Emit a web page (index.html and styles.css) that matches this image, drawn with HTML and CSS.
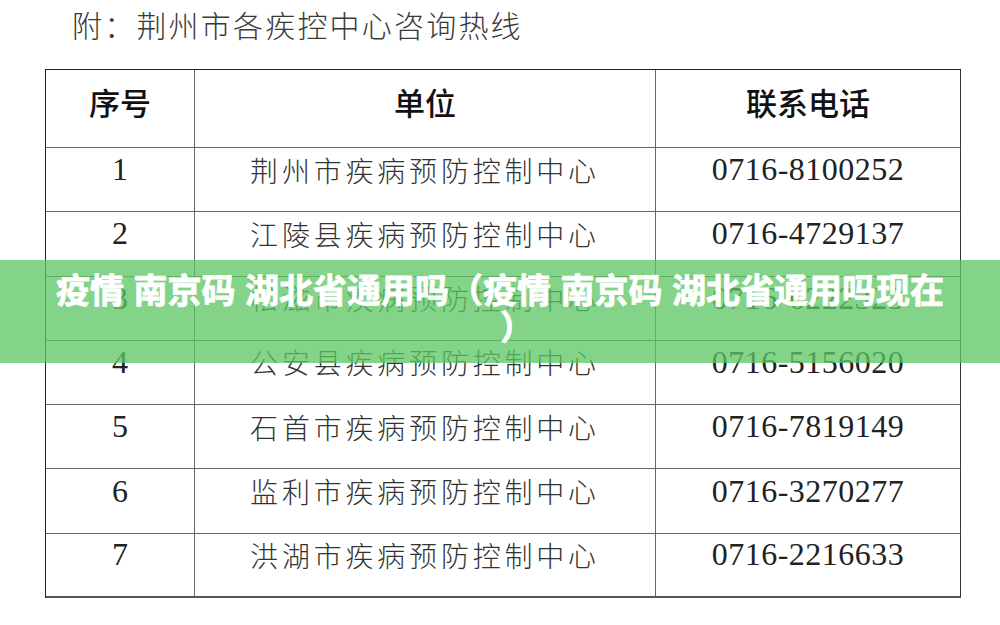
FILE: index.html
```html
<!DOCTYPE html>
<html lang="zh-CN">
<head>
<meta charset="utf-8">
<title>荆州市各疾控中心咨询热线</title>
<link rel="stylesheet" href="styles.css">
</head>
<body>
<div class="page">
  <h1 class="title">附：荆州市各疾控中心咨询热线</h1>
  <div class="grid">
    <div class="cell head">序号</div>
    <div class="cell head">单位</div>
    <div class="cell head">联系电话</div>

    <div class="cell num">1</div>
    <div class="cell unit">荆州市疾病预防控制中心</div>
    <div class="cell phone">0716-8100252</div>

    <div class="cell num">2</div>
    <div class="cell unit">江陵县疾病预防控制中心</div>
    <div class="cell phone">0716-4729137</div>

    <div class="cell num">3</div>
    <div class="cell unit">松滋市疾病预防控制中心</div>
    <div class="cell phone">0716-6222323</div>

    <div class="cell num">4</div>
    <div class="cell unit">公安县疾病预防控制中心</div>
    <div class="cell phone">0716-5156020</div>

    <div class="cell num">5</div>
    <div class="cell unit">石首市疾病预防控制中心</div>
    <div class="cell phone">0716-7819149</div>

    <div class="cell num">6</div>
    <div class="cell unit">监利市疾病预防控制中心</div>
    <div class="cell phone">0716-3270277</div>

    <div class="cell num">7</div>
    <div class="cell unit">洪湖市疾病预防控制中心</div>
    <div class="cell phone">0716-2216633</div>
  </div>
  <div class="banner">
    <p class="banner-text">疫情 南京码 湖北省通用吗（疫情 南京码 湖北省通用吗现在<br><span class="close-paren">）</span></p>
  </div>
</div>
</body>
</html>
```

FILE: styles.css
```css
html, body {
  margin: 0;
  padding: 0;
  background: #ffffff;
}

.page {
  position: relative;
  width: 1000px;
  height: 625px;
  overflow: hidden;
  background: #ffffff;
}

.title {
  margin: 0;
  padding: 9px 0 0 72px;
  height: 30px;
  font-family: "Noto Sans CJK SC", sans-serif;
  font-weight: 300;
  font-size: 30px;
  line-height: 30px;
  letter-spacing: 2.2px;
  color: #3a3a3a;
}

.grid {
  margin: 30px 0 0 45px;
  width: 916px;
  box-sizing: border-box;
  display: grid;
  grid-template-columns: 149px 461px 305px;
  grid-template-rows: 78px repeat(7, 64.286px);
  border-top: 1px solid #222;
  border-left: 1px solid #222;
}

.cell {
  box-sizing: border-box;
  display: flex;
  align-items: center;
  justify-content: center;
  border-right: 1px solid #666;
  border-bottom: 1px solid #666;
  padding-bottom: 20px;
  color: #222;
  white-space: nowrap;
}

.cell:nth-child(3n) {
  border-right-color: #333;
}

.cell:nth-last-child(-n+3) {
  border-bottom: 2px solid #555;
}

.head {
  padding-bottom: 14px;
  font-family: "Noto Sans CJK SC", sans-serif;
  font-weight: 500;
  font-size: 31px;
  color: #111;
}

.num {
  font-family: "Liberation Serif", serif;
  font-size: 32px;
}

.unit {
  font-family: "Noto Sans CJK SC", sans-serif;
  font-weight: 300;
  font-size: 28px;
  letter-spacing: 3.8px;
  color: #333;
}

.phone {
  font-family: "Liberation Serif", serif;
  font-size: 32px;
  letter-spacing: 0.5px;
}

.banner {
  position: absolute;
  left: 0;
  top: 260px;
  width: 1000px;
  height: 103px;
  background: rgba(92, 198, 99, 0.76);
}

.banner-text {
  margin: 0;
  padding-top: 13px;
  text-align: center;
  font-family: "Liberation Sans", "Noto Sans CJK SC", sans-serif;
  font-weight: 700;
  font-size: 34px;
  line-height: 37px;
  color: #ffffff;
  -webkit-text-stroke: 0.8px #ffffff;
}

.close-paren {
  display: inline-block;
  margin-left: 34px;
}
```
